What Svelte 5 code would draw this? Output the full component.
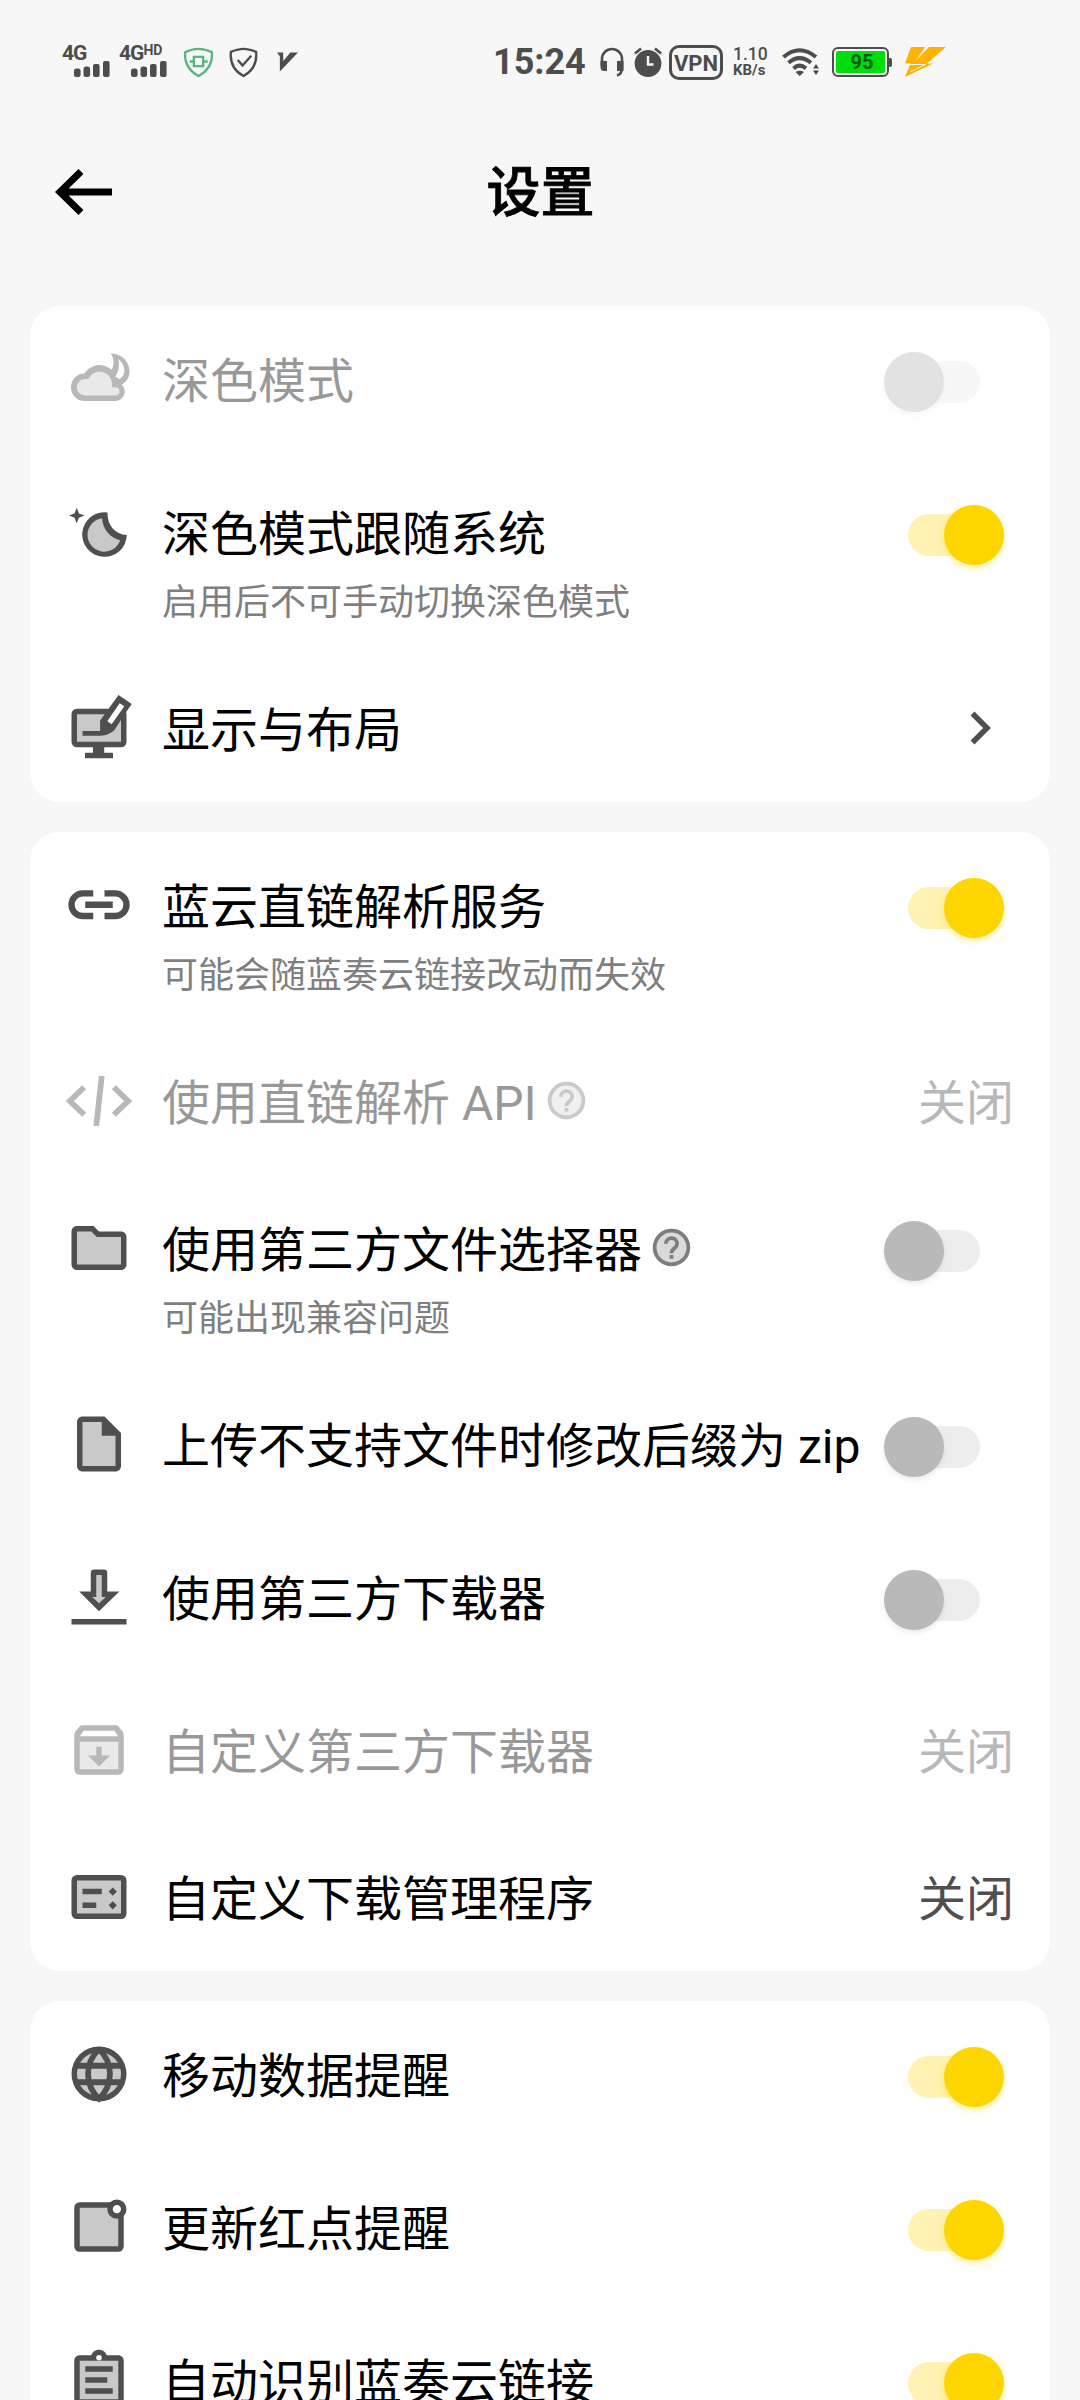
<script>
	let title = '设置';

	let groups = $state([
		[
			{ icon: 'cloud', title: '深色模式', type: 'switch', on: false, disabled: true },
			{
				icon: 'moon',
				title: '深色模式跟随系统',
				summary: '启用后不可手动切换深色模式',
				type: 'switch',
				on: true
			},
			{ icon: 'display', title: '显示与布局', type: 'link' }
		],
		[
			{
				icon: 'link',
				title: '蓝云直链解析服务',
				summary: '可能会随蓝奏云链接改动而失效',
				type: 'switch',
				on: true
			},
			{ icon: 'code', title: '使用直链解析 API', help: true, type: 'value', value: '关闭', disabled: true },
			{
				icon: 'folder',
				title: '使用第三方文件选择器',
				summary: '可能出现兼容问题',
				help: true,
				type: 'switch',
				on: false
			},
			{ icon: 'file', title: '上传不支持文件时修改后缀为 zip', type: 'switch', on: false },
			{ icon: 'download', title: '使用第三方下载器', type: 'switch', on: false },
			{ icon: 'archive', title: '自定义第三方下载器', type: 'value', value: '关闭', disabled: true },
			{ icon: 'manager', title: '自定义下载管理程序', type: 'value', value: '关闭' }
		],
		[
			{ icon: 'globe', title: '移动数据提醒', type: 'switch', on: true },
			{ icon: 'dot', title: '更新红点提醒', type: 'switch', on: true },
			{ icon: 'clipboard', title: '自动识别蓝奏云链接', type: 'switch', on: true }
		]
	]);

	// two-tone icons on a 24 grid: main = dark shape, top = light fill, hole = cut out on top
	const icons = {
		cloud: {
			main: 'M16.2 2.7C20 2.5 23.1 5.6 23.1 9.2C23.1 12 21.4 13.9 19 14.6L15.4 10.2C17.6 8 18 5.2 16.2 2.7Z M6.9 20A5 5 0 0 1 6.7 10A6.5 6.5 0 0 1 18.7 13.1A3.5 3.5 0 0 1 17.8 20Z',
			top: 'M6.9 18A3 3 0 0 1 6.9 12H8.1A4.5 4.5 0 0 1 16.7 13.4V15H18A1.5 1.5 0 0 1 18 18Z',
			hole: 'M19 4.8C20.4 5.7 21.2 7.3 21.2 9C21.2 10.3 20.5 11.5 19.4 12L17.9 11.1C19.1 9.3 19.6 7 19 4.8Z'
		},
		moon: {
			main: 'M15.1 4.9A8.1 8.1 0 1 0 22.1 13.1C17.7 12.8 15 9.5 15.1 4.9Z M3.9 3.2L4.7 5.3L6.7 6L4.7 6.8L3.9 8.8L3.1 6.8L1.1 6L3.1 5.3Z',
			top: 'M13.1 7A6.1 6.1 0 1 0 19.7 15C15.9 14.2 13.3 10.8 13.1 7Z'
		},
		display: {
			main: 'M4 5H20A2 2 0 0 1 22 7V17A2 2 0 0 1 20 19H13.9V21H17.1V23H6.9V21H9.8V19H4A2 2 0 0 1 2 17V7A2 2 0 0 1 4 5Z',
			top: 'M4 7H20V17H4Z',
			pen: 'M19.1 0L23.9 3.3L22 6L17.5 12.9C16.6 13.7 14.5 14.8 12.6 14.8H6V13.1H12.4V9.3Z',
			hole: 'M19.5 3L21.2 4.1L16.6 10.6L15 9.5Z'
		},
		link: {
			stroke: 'M9.9 7.8H6.1A4.1 4.1 0 0 0 6.1 16H9.9M14 7.8H17.9A4.1 4.1 0 0 1 17.9 16H14M7 11.9H17'
		},
		code: {
			thin: 'M6.6 7L1.4 12L6.6 17M17.4 7L22.6 12L17.4 17M13 2.9L11 21.1'
		},
		folder: {
			main: 'M20 6h-8l-2-2H4c-1.1 0-2 .9-2 2v12c0 1.1.9 2 2 2h16c1.1 0 2-.9 2-2V8c0-1.1-.9-2-2-2z',
			top: 'M9.2 6l2 2H20v10H4V6z'
		},
		file: {
			main: 'M14 2H6c-1.1 0-2 .9-2 2v16c0 1.1.9 2 2 2h12c1.1 0 2-.9 2-2V8z',
			top: 'M13 4H6v16h12V9h-5z'
		},
		download: {
			main: 'M10.2 2H13.8Q15 2 15 3.2V10H19.4L12 17.2L4.8 10H9V3.2Q9 2 10.2 2Z M2 20H22V22H2Z',
			top: 'M11 4H13V12H14.5L12 14.3L9.5 12H11Z'
		},
		archive: {
			main: 'M20.5 5.2L19.2 3.5A1.5 1.5 0 0 0 18 3H6A1.5 1.5 0 0 0 4.8 3.5L3.5 5.2A2 2 0 0 0 3 6.5V19A2 2 0 0 0 5 21H19A2 2 0 0 0 21 19V6.5A2 2 0 0 0 20.5 5.2Z',
			top: 'M5 9H19V19H5Z',
			hole: 'M6.4 5H17.6L19 7H5Z',
			pen: 'M11 10.8H13V14H16L12 18L8 14H11Z'
		},
		manager: {
			main: 'M4 4H20A2 2 0 0 1 22 6V18A2 2 0 0 1 20 20H4A2 2 0 0 1 2 18V6A2 2 0 0 1 4 4Z',
			top: 'M4 6H20V18H4Z',
			pen: 'M6 9H13V11H6ZM6 14H11V16H6ZM17 8.5L18.5 10L17 11.5L15.5 10ZM17 13.5L18.5 15L17 16.5L15.5 15Z'
		},
		globe: {
			main: 'M12 2A10 10 0 1 0 12 22A10 10 0 1 0 12 2Z',
			top: 'M12 4A8 8 0 1 0 12 20A8 8 0 1 0 12 4Z',
			thin: 'M12 3C6.7 8 6.7 16 12 21C17.3 16 17.3 8 12 3M3.6 9H20.4M3.6 15H20.4'
		},
		dot: {
			main: 'M5 3H19A2 2 0 0 1 21 5V19A2 2 0 0 1 19 21H5A2 2 0 0 1 3 19V5A2 2 0 0 1 5 3Z',
			top: 'M5 5H19V19H5Z',
			pen: 'M18.5 2A3.5 3.5 0 1 0 18.5 9A3.5 3.5 0 1 0 18.5 2Z',
			hole: 'M18.5 4A1.5 1.5 0 1 0 18.5 7A1.5 1.5 0 1 0 18.5 4Z'
		},
		clipboard: {
			main: 'M19 3h-4.2C14.4 1.8 13.3 1 12 1s-2.4.8-2.8 2H5c-1.1 0-2 .9-2 2v14c0 1.1.9 2 2 2h14c1.1 0 2-.9 2-2V5c0-1.1-.9-2-2-2z',
			top: 'M5 5H19V19H5Z',
			pen: 'M7 7h10v2H7zM7 11h8v2H7zM7 15h10v2H7z',
			hole: 'M12 2.9A1 1 0 1 0 12 4.9A1 1 0 1 0 12 2.9Z'
		}
	};

	function toggle(item) {
		if (!item.disabled) item.on = !item.on;
	}
</script>

{#snippet signal()}
	<svg class="signal" viewBox="0 0 36 16">
		<rect x="0" y="7.5" width="6.6" height="8.5" rx="2.5" />
		<rect x="9.5" y="5.5" width="6.6" height="10.5" rx="2.5" />
		<rect x="19" y="3" width="6.6" height="13" rx="2" />
		<rect x="29" y="0" width="6.6" height="16" rx="2" />
	</svg>
{/snippet}

<div class="screen">
	<div class="status">
		<div class="sim">
			<span>4G</span>
			{@render signal()}
		</div>
		<div class="sim second">
			<span>4G<sup>HD</sup></span>
			{@render signal()}
		</div>
		<svg class="shield green" viewBox="0 0 32 32">
			<path d="M16 2C11 2 6 3.5 2.2 5.5C1.5 15 5 24 16 30C27 24 30.5 15 29.8 5.5C26 3.5 21 2 16 2Z" />
			<path d="M11.2 10.2H20.8V19.8H11.2ZM7 15H11M21 15H25.5" />
		</svg>
		<svg class="shield" viewBox="0 0 32 32">
			<path d="M16 2C11 2 7 3.5 3 5C2 15 5 24 16 30C27 24 30 15 29 5C25 3.5 21 2 16 2Z" />
			<path d="M10 13.5L15 19L24 9" />
		</svg>
		<svg class="vee" viewBox="0 0 22 20"><path d="M0 0H6.5V9L14 0H22L3 20V4Z" /></svg>

		<span class="time">15:24</span>
		<svg class="headset" viewBox="0 0 26 32">
			<path d="M3 20V13A10 10 0 0 1 23 13V22Q23 28 18 29.5" fill="none" stroke="#4d4d4d" stroke-width="2.6" />
			<path d="M1.5 15H8V25H5Q1.5 25 1.5 21ZM24.5 15H18V25H24.5Z" />
		</svg>
		<svg class="alarm" viewBox="0 0 30 30">
			<circle cx="15" cy="16.5" r="13.4" />
			<path d="M2 6.5L8 1.5M28 6.5L22 1.5" stroke="#4d4d4d" stroke-width="2.6" />
			<path d="M15 9V17.5H20.5" fill="none" stroke="#f7f7f7" stroke-width="2.4" />
		</svg>
		<span class="vpn">VPN</span>
		<span class="speed"><b>1.10</b><i>KB/s</i></span>
		<svg class="wifi" viewBox="0 0 38 28">
			<g fill="none" stroke="#4d4d4d" stroke-width="4">
				<path d="M1.5 9Q17.5 -4.5 34 9" />
				<path d="M6.5 14.8Q17.5 5.4 29 14.8" />
				<path d="M11.5 20.4Q17.5 15 24 20.4" />
			</g>
			<path d="M13.5 24Q17.7 21.5 22 24L17.7 28ZM31 20.5L34 16L37 20.5ZM31 22.5H37L34 27Z" />
		</svg>
		<span class="battery"><span>95</span></span>
		<svg class="bolt" viewBox="0 0 42 30">
			<path d="M7 0H21L12 13.5L25 0H42L23 16.5H29L1 30L6.5 16.5H1Z" />
			<path d="M5 17.5H21.5L6 25" stroke="#f7f7f7" fill="none" />
		</svg>
	</div>

	<header>
		<svg class="back" viewBox="0 0 60 48">
			<path d="M27 3.5L6 24L27 44.5M5 24H58" />
		</svg>
		<h1>{title}</h1>
		<span class="back"></span>
	</header>

	<main>
		{#each groups as group}
			<section class="card">
				{#each group as item}
					{@const icon = icons[item.icon]}
					<div
						class="row"
						class:toggle={item.type === 'switch'}
						class:tall={item.summary}
						class:disabled={item.disabled}
					>
						<svg class="icon" viewBox="0 0 24 24">
							{#if icon.main}<path d={icon.main} />{/if}
							{#if icon.top}<path class="soft" d={icon.top} />{/if}
							{#if icon.stroke}<path class="stroke" d={icon.stroke} />{/if}
							{#if icon.thin}<path class="stroke thin" d={icon.thin} />{/if}
							{#if icon.pen}<path d={icon.pen} />{/if}
							{#if icon.hole}<path class="hole" d={icon.hole} />{/if}
						</svg>

						<div class="text">
							<div class="title">
								<span>{item.title}</span>
								{#if item.help}
									<svg class="help" viewBox="0 0 24 24">
										<circle cx="12" cy="12" r="9" />
										<path d="M9 10A3 3 0 0 1 15 10C15 12.4 12 12.4 12 15M12 16V18" />
									</svg>
								{/if}
							</div>
							{#if item.summary}
								<div class="summary">{item.summary}</div>
							{/if}
						</div>

						{#if item.type === 'switch'}
							<button
								class="switch"
								class:on={item.on}
								role="switch"
								aria-checked={item.on}
								aria-label={item.title}
								onclick={() => toggle(item)}
							>
								<span class="thumb"></span>
							</button>
						{:else if item.type === 'value'}
							<span class="value">{item.value}</span>
						{:else}
							<svg class="chevron" viewBox="0 0 22 34"><path d="M2.5 2.5L17 17L2.5 31.5" /></svg>
						{/if}
					</div>
				{/each}
			</section>
		{/each}
	</main>
</div>

<style>
	:global(body) {
		background: #f7f7f7;
	}

	.screen {
		box-sizing: border-box;
		width: 1080px;
		height: 2400px;
		overflow: hidden;
		background: #f7f7f7;
		color: #000;
		font-family: Roboto, 'Noto Sans CJK SC', sans-serif;
	}

	svg {
		display: block;
		flex: none;
	}

	/* status bar */
	.status {
		box-sizing: border-box;
		display: flex;
		align-items: center;
		height: 124px;
		padding-left: 62px;
		color: #4d4d4d;
		fill: #4d4d4d;
		white-space: nowrap;
	}

	.sim {
		width: 49px;
		height: 32px;
	}

	.sim.second {
		margin-left: 8px;
	}

	.sim span {
		display: block;
		height: 15px;
		font-size: 21px;
		font-weight: 700;
		line-height: 14px;
		letter-spacing: -1px;
	}

	.sim sup {
		font-size: 14px;
		line-height: 0;
		letter-spacing: 0;
		vertical-align: 5px;
	}

	.signal {
		width: 36px;
		height: 16px;
		margin-left: 12px;
	}

	.shield {
		width: 31px;
		height: 31px;
		margin-left: 14px;
		fill: none;
		stroke: #4d4d4d;
		stroke-width: 2.4;
	}

	.shield.green {
		margin-left: 15px;
		stroke: #58b57e;
	}

	.vee {
		width: 21px;
		height: 20px;
		margin-left: 18px;
	}

	.time {
		width: 92px;
		margin-left: 195px;
		font-size: 36px;
		font-weight: 700;
	}

	.headset {
		width: 26px;
		height: 32px;
		margin-left: 14px;
	}

	.alarm {
		width: 30px;
		height: 30px;
		margin-left: 8px;
	}

	.vpn {
		box-sizing: border-box;
		width: 54px;
		height: 35px;
		margin-left: 6px;
		border: 3px solid #4d4d4d;
		border-radius: 10px;
		font-size: 22px;
		font-weight: 700;
		line-height: 31px;
		text-align: center;
	}

	.speed {
		display: flex;
		flex-direction: column;
		width: 36px;
		margin-left: 10px;
		font-size: 17.5px;
		line-height: 16px;
	}

	.speed b {
		font-weight: 500;
	}

	.speed i {
		font-size: 15px;
		font-style: normal;
		font-weight: 700;
	}

	.wifi {
		width: 38px;
		height: 28px;
		margin-left: 13px;
	}

	.battery {
		position: relative;
		box-sizing: border-box;
		width: 57px;
		height: 30px;
		margin-left: 12px;
		padding: 2px;
		border: 2px solid #4d4d4d;
		border-radius: 6px;
	}

	.battery::after {
		content: '';
		position: absolute;
		top: 9px;
		right: -5px;
		width: 3px;
		height: 9px;
		border-radius: 0 2px 2px 0;
		background: #4d4d4d;
	}

	.battery span {
		display: block;
		height: 22px;
		border-radius: 2px;
		background: #00dc0c;
		color: #0a5c0e;
		font-size: 20px;
		font-weight: 700;
		line-height: 22px;
		text-align: center;
		text-indent: 3px;
	}

	.bolt {
		width: 42px;
		height: 30px;
		margin-left: 15px;
		fill: #ffb300;
	}

	/* title bar */
	header {
		box-sizing: border-box;
		display: flex;
		align-items: center;
		justify-content: space-between;
		height: 182px;
		padding: 0 53px 46px 54px;
	}

	.back {
		width: 60px;
		height: 48px;
		fill: none;
		stroke: #000;
		stroke-width: 7;
	}

	h1 {
		margin: 3px 0 0;
		font-size: 54px;
		font-weight: 500;
		line-height: 80px;
		-webkit-text-stroke: 0.8px #000;
	}

	/* cards */
	main {
		display: flex;
		flex-direction: column;
		gap: 30px;
		padding: 0 30px;
	}

	.card {
		border-radius: 30px;
		background: #fff;
	}

	.row {
		box-sizing: border-box;
		display: flex;
		align-items: flex-start;
		height: 147px;
		padding: 0 36px;
	}

	.row.toggle {
		height: 153px;
	}

	.row.tall {
		height: 196px;
	}

	.icon {
		width: 66px;
		height: 66px;
		margin: 40px 30px 0 0;
		fill: #4f4f4f;
	}

	.soft {
		fill: #c9c9c9;
	}

	.hole {
		fill: #fff;
	}

	.stroke {
		fill: none;
		stroke: #4f4f4f;
		stroke-width: 2.3;
	}

	.thin {
		stroke-width: 2.1;
	}

	.text {
		flex: 1;
		min-width: 0;
		padding-top: 41px;
		white-space: nowrap;
	}

	.title {
		display: flex;
		align-items: flex-start;
		gap: 7px;
		height: 70px;
		font-size: 48px;
		line-height: 70px;
	}

	.help {
		width: 45px;
		height: 45px;
		margin-top: 9px;
		fill: #dadada;
		stroke: #7d7d7d;
		stroke-width: 2;
	}

	.help path {
		fill: none;
	}

	.summary {
		margin-top: 7px;
		color: #7f7f7f;
		font-size: 36px;
		line-height: 52px;
	}

	.switch {
		display: grid;
		grid-template-columns: 24px 72px 24px;
		align-items: center;
		flex: none;
		width: 120px;
		height: 60px;
		margin: 46px 10px 0 -30px;
		padding: 0;
		border: 0;
		background: none;
	}

	.switch::before {
		content: '';
		grid-area: 1 / 2;
		height: 42px;
		border-radius: 21px;
		background: #ededed;
	}

	.thumb {
		grid-area: 1 / 1 / 2 / 4;
		width: 60px;
		height: 60px;
		border-radius: 50%;
		background: #b9b9b9;
		box-shadow: 0 3px 5px rgba(0, 0, 0, 0.08);
	}

	.switch.on::before {
		background: #fff2b3;
	}

	.switch.on .thumb {
		justify-self: end;
		background: #ffd500;
		box-shadow: 0 3px 6px rgba(255, 213, 0, 0.4);
	}

	.value {
		margin-top: 41px;
		color: #4f4f4f;
		font-size: 48px;
		line-height: 70px;
	}

	.chevron {
		width: 22px;
		height: 34px;
		margin: 56px 22px 0 0;
		fill: none;
		stroke: #4f4f4f;
		stroke-width: 5.5;
	}

	.disabled > * {
		opacity: 0.4;
	}
</style>
